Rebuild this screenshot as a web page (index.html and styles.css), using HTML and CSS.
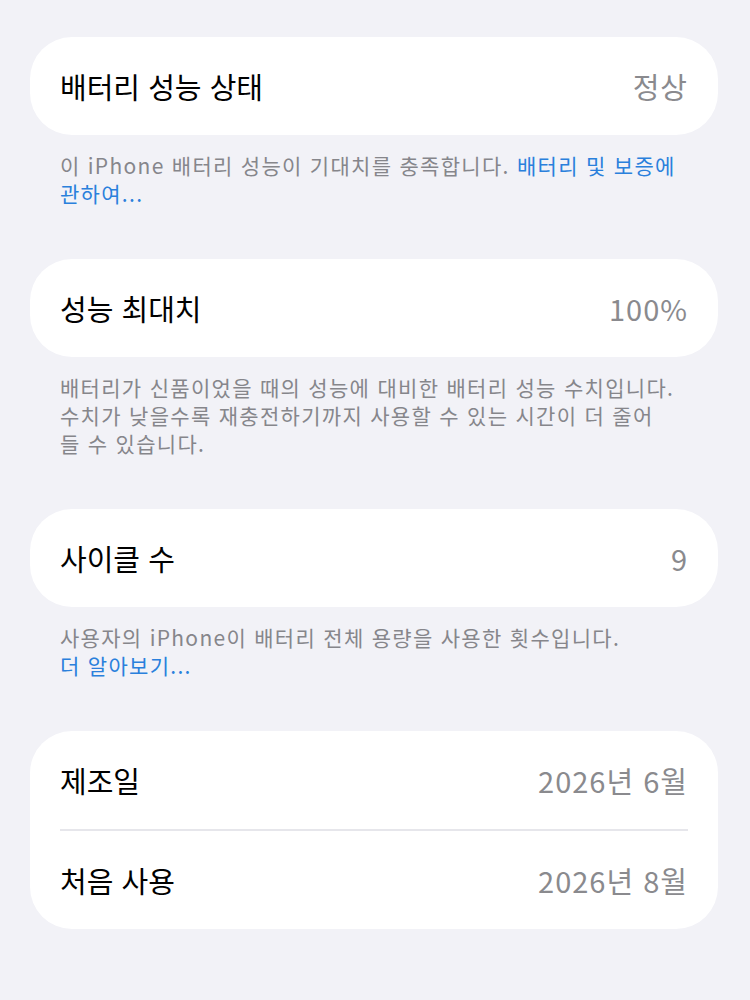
FILE: index.html
```html
<!DOCTYPE html>
<html lang="ko">
<head>
    <meta charset="UTF-8">
    <meta name="viewport" content="width=device-width, initial-scale=1.0">
    <title>배터리 성능 상태</title>
    <link rel="stylesheet" href="styles.css">
</head>
<body>
    <div class="page">
        <div class="group">
            <div class="row">
                <span class="label">배터리 성능 상태</span>
                <span class="value">정상</span>
            </div>
        </div>
        <p class="footer">이 iPhone 배터리 성능이 기대치를 충족합니다. <a class="link">배터리 및 보증에<br>관하여...</a></p>

        <div class="group">
            <div class="row">
                <span class="label">성능 최대치</span>
                <span class="value">100%</span>
            </div>
        </div>
        <p class="footer">배터리가 신품이었을 때의 성능에 대비한 배터리 성능 수치입니다.<br>수치가 낮을수록 재충전하기까지 사용할 수 있는 시간이 더 줄어<br>들 수 있습니다.</p>

        <div class="group">
            <div class="row">
                <span class="label">사이클 수</span>
                <span class="value">9</span>
            </div>
        </div>
        <p class="footer">사용자의 iPhone이 배터리 전체 용량을 사용한 횟수입니다.<br><a class="link">더 알아보기...</a></p>

        <div class="group">
            <div class="row">
                <span class="label">제조일</span>
                <span class="value">2026년 6월</span>
            </div>
            <div class="row">
                <span class="label">처음 사용</span>
                <span class="value">2026년 8월</span>
            </div>
        </div>
    </div>
</body>
</html>
```

FILE: styles.css
```css
html, body {
    margin: 0;
    padding: 0;
    background-color: #f2f2f7;
}
body {
    font-family: "Noto Sans CJK KR", "Noto Sans", sans-serif;
    -webkit-font-smoothing: antialiased;
}
.page {
    padding: 37px 32px 40px 30px;
}
.group {
    background-color: #ffffff;
    border-radius: 42px;
    padding: 0 30px;
}
.row {
    display: flex;
    justify-content: space-between;
    align-items: center;
    height: 98px;
    font-size: 29px;
}
.row + .row {
    border-top: 2px solid #e6e6eb;
}
.label {
    color: #000000;
}
.value {
    color: #8a8a8e;
    letter-spacing: 1px;
}
.footer {
    margin: 0 0 52px 0;
    padding: 16px 20px 0 30px;
    font-size: 21px;
    line-height: 28px;
    letter-spacing: 1.3px;
    color: #86868b;
}
.link {
    color: #2a80dc;
}
```
